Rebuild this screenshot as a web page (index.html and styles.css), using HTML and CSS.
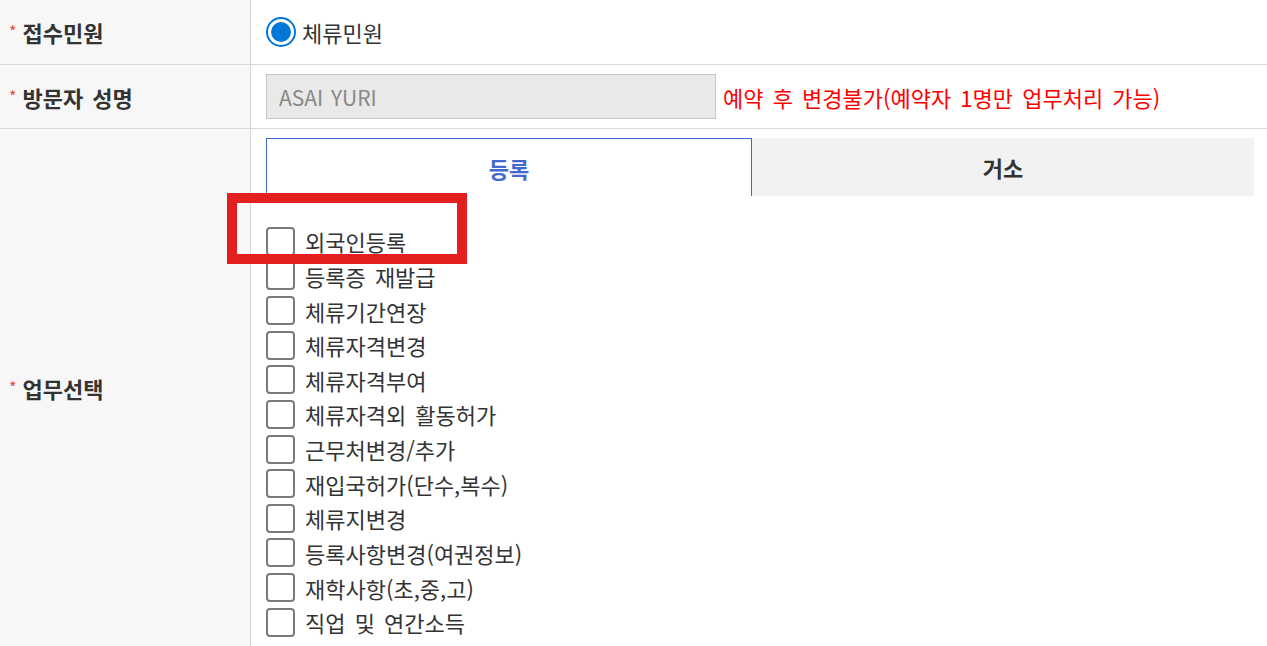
FILE: index.html
```html
<!DOCTYPE html>
<html lang="ko">
<head>
  <meta charset="UTF-8">
  <title>방문예약 - 업무선택</title>
  <link rel="stylesheet" href="styles.css">
</head>
<body>
  <div class="form-table">
    <div class="row row-short">
      <div class="row-head"><span class="req">*</span>접수민원</div>
      <div class="row-body">
        <label class="radio">
          <span class="radio-mark"></span>
          <span>체류민원</span>
        </label>
      </div>
    </div>

    <div class="row row-short row-name">
      <div class="row-head"><span class="req">*</span>방문자 성명</div>
      <div class="row-body">
        <input class="name-input" type="text" value="ASAI YURI" disabled>
        <span class="notice">예약 후 변경불가(예약자 1명만 업무처리 가능)</span>
      </div>
    </div>

    <div class="row">
      <div class="row-head"><span class="req">*</span>업무선택</div>
      <div class="row-body work">
        <div class="tabs">
          <div class="tab active">등록</div>
          <div class="tab">거소</div>
        </div>
        <ul class="check-list">
          <li><span class="check-box"></span>외국인등록</li>
          <li><span class="check-box"></span>등록증 재발급</li>
          <li><span class="check-box"></span>체류기간연장</li>
          <li><span class="check-box"></span>체류자격변경</li>
          <li><span class="check-box"></span>체류자격부여</li>
          <li><span class="check-box"></span>체류자격외 활동허가</li>
          <li><span class="check-box"></span>근무처변경/추가</li>
          <li><span class="check-box"></span>재입국허가(단수,복수)</li>
          <li><span class="check-box"></span>체류지변경</li>
          <li><span class="check-box"></span>등록사항변경(여권정보)</li>
          <li><span class="check-box"></span>재학사항(초,중,고)</li>
          <li><span class="check-box"></span>직업 및 연간소득</li>
        </ul>
      </div>
    </div>
  </div>

  <!-- 캡처용 강조 표시 -->
  <div class="highlight"></div>
</body>
</html>
```

FILE: styles.css
```css
:root {
  --line-color: #d9d9d9;
  --head-bg: #f7f7f7;
  --text-color: #333;
  --point-color: #4169cf;
  --body-font: "Noto Sans CJK KR", "Noto Sans", sans-serif;
}

* {
  margin: 0;
  padding: 0;
  box-sizing: border-box;
}

body {
  font-family: var(--body-font);
  font-size: 22px;
  word-spacing: 3px;
  color: var(--text-color);
  background: #fff;
  position: relative;
}

.row {
  display: grid;
  grid-template-columns: 251px 1fr;
  border-bottom: 1px solid var(--line-color);
}

.row-short {
  height: 65px;
}

.row-name {
  height: 64px;
}

.row-head {
  display: flex;
  align-items: center;
  padding-left: 9px;
  background: var(--head-bg);
  border-right: 1px solid var(--line-color);
  font-weight: 700;
}

.req {
  color: #e8473c;
  font-size: 16px;
  font-weight: 400;
  margin-right: 6px;
  position: relative;
  top: -1px;
}

.row-body {
  display: flex;
  align-items: center;
  padding-left: 15px;
}

.radio {
  display: flex;
  align-items: center;
  gap: 6px;
}

.radio-mark {
  width: 30px;
  height: 30px;
  border: 2px solid #0078d7;
  border-radius: 50%;
  display: flex;
  align-items: center;
  justify-content: center;
}

.radio-mark::after {
  content: "";
  width: 20px;
  height: 20px;
  border-radius: 50%;
  background: #0078d7;
}

.name-input {
  width: 450px;
  height: 45px;
  padding: 0 12px;
  background: #e9e9e9;
  border: 1px solid #c6c6c6;
  font-family: var(--body-font);
  font-size: 21px;
  word-spacing: 2px;
  color: #888;
}

.notice {
  margin-left: 7px;
  color: #ff0000;
}

.work {
  display: block;
  padding: 9px 13px 8px 15px;
}

.tabs {
  display: flex;
  height: 58px;
}

.tab {
  flex: 1;
  display: flex;
  align-items: center;
  justify-content: center;
  background: #f2f2f2;
  font-weight: 700;
}

.tab.active {
  flex: 0 0 486px;
  background: #fff;
  color: var(--point-color);
  border: 1px solid var(--point-color);
  border-bottom: none;
}

.check-list {
  list-style: none;
  margin-top: 28px;
}

.check-list li {
  display: flex;
  align-items: center;
  height: 34.64px;
}

.check-box {
  width: 29px;
  height: 29px;
  margin-right: 10px;
  border: 2px solid #7a7a7a;
  border-radius: 4px;
  background: #fff;
}

.highlight {
  position: absolute;
  left: 227px;
  top: 193px;
  width: 240px;
  height: 71px;
  border: 10px solid #e41f1f;
}
```
